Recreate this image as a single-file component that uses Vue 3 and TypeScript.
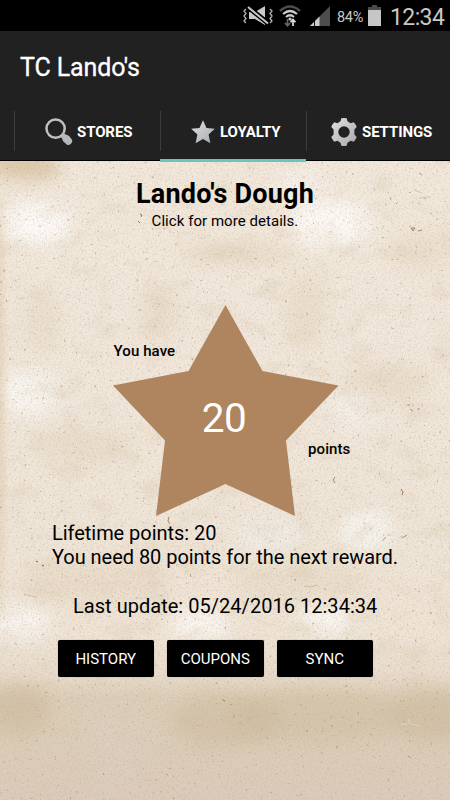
<script setup lang="ts">
import { ref } from 'vue'

interface Tab { id: string; label: string }
interface Patch { x: number; y: number; rx: number; ry: number; color: string; opacity: number }
interface Pit { x: number; y: number; d: string; color: string }

const tabs: Tab[] = [
  { id: 'stores', label: 'STORES' },
  { id: 'loyalty', label: 'LOYALTY' },
  { id: 'settings', label: 'SETTINGS' },
]
const active = ref('loyalty')
const points = ref(20)
const remaining = ref(80)
const actions: string[] = ['HISTORY', 'COUPONS', 'SYNC']

// Light and dark stains of the travertine surface
const patches: Patch[] = [
  { x: 36, y: 62, rx: 34, ry: 20, color: '#ffffff', opacity: 0.85 },
  { x: 330, y: 62, rx: 42, ry: 22, color: '#ffffff', opacity: 0.8 },
  { x: 300, y: 24, rx: 24, ry: 14, color: '#ffffff', opacity: 0.45 },
  { x: 28, y: 232, rx: 28, ry: 24, color: '#fbfbf8', opacity: 0.75 },
  { x: 355, y: 248, rx: 24, ry: 20, color: '#f8f8f5', opacity: 0.6 },
  { x: 366, y: 370, rx: 26, ry: 20, color: '#f9fbf8', opacity: 0.75 },
  { x: 270, y: 375, rx: 34, ry: 16, color: '#f2f2ee', opacity: 0.6 },
  { x: 22, y: 462, rx: 30, ry: 16, color: '#ffffff', opacity: 0.7 },
  { x: 200, y: 464, rx: 30, ry: 16, color: '#ffffff', opacity: 0.7 },
  { x: 327, y: 458, rx: 28, ry: 16, color: '#ffffff', opacity: 0.65 },
  { x: 24, y: 4, rx: 38, ry: 14, color: '#cbae82', opacity: 0.55 },
  { x: 0, y: 240, rx: 4, ry: 210, color: '#d5b98f', opacity: 0.4 },
  { x: 235, y: 93, rx: 60, ry: 10, color: '#d8c8a8', opacity: 0.4 },
  { x: 160, y: 150, rx: 22, ry: 28, color: '#dfd0b2', opacity: 0.35 },
  { x: 305, y: 150, rx: 20, ry: 40, color: '#e0d2b4', opacity: 0.4 },
  { x: 42, y: 158, rx: 20, ry: 34, color: '#e0d3b8', opacity: 0.35 },
  { x: 420, y: 90, rx: 32, ry: 20, color: '#e0d0b4', opacity: 0.35 },
  { x: 85, y: 285, rx: 50, ry: 18, color: '#decfb2', opacity: 0.35 },
  { x: 385, y: 222, rx: 44, ry: 18, color: '#decfb2', opacity: 0.4 },
  { x: 95, y: 420, rx: 75, ry: 22, color: '#dfcfb2', opacity: 0.35 },
  { x: 300, y: 420, rx: 70, ry: 20, color: '#dfcfb2', opacity: 0.3 },
  { x: 18, y: 548, rx: 32, ry: 26, color: '#c6b08e', opacity: 0.4 },
  { x: 225, y: 560, rx: 56, ry: 26, color: '#c7b493', opacity: 0.4 },
  { x: 320, y: 555, rx: 90, ry: 26, color: '#c8b695', opacity: 0.35 },
  { x: 432, y: 555, rx: 40, ry: 26, color: '#c4b08e', opacity: 0.4 },
  { x: 115, y: 590, rx: 30, ry: 40, color: '#ddd2c4', opacity: 0.4 },
]
const pits: Pit[] = [
  { x: 140, y: 55, d: 'm0-2 2 1-1 2M-2 5l2 2', color: '#80603c' },
  { x: 413, y: 68, d: 'm-2-1h4l-2 3zM5 2l4-1', color: '#8a6c48' },
  { x: 412, y: 248, d: 'm-2 0 3 2M5 0h3M-5-4h3', color: '#a08058' },
  { x: 334, y: 319, d: 'm1-3-2 3 2 3', color: '#b06a2e' },
  { x: 402, y: 332, d: 'm-1-4 2 3-1 3', color: '#8b5a30' },
  { x: 169, y: 359, d: 'm0-3-1 4 2 3', color: '#a86a34' },
  { x: 385, y: 378, d: 'm-2 1 3-3', color: '#b9804c' },
  { x: 404, y: 375, d: 'm-2 2 5-3', color: '#a87e50' },
  { x: 41, y: 403, d: 'm-5-3 2 1M1 1l2 1', color: '#55391f' },
  { x: 30, y: 435, d: 'm-6-2 8 2 5 1', color: '#cdb592' },
  { x: 310, y: 424, d: 'm-6 1 6 1 8-2', color: '#c8b492' },
  { x: 190, y: 415, d: 'm0-2 1 3', color: '#a98860' },
  { x: 423, y: 34, d: 'm-9-5 8 3M-4 3l12-1', color: '#d2bd9a' },
  { x: 155, y: 31, d: 'm-3-2 2 1M4 0l2 1', color: '#a58a66' },
  { x: 390, y: 38, d: 'm0-2 1 3M6 5l2-2', color: '#b49a74' },
  { x: 421, y: 14, d: 'm-2-2 3 2', color: '#a58a66' },
  { x: 410, y: 563, d: 'm-9 0h6m4 0 9 2m-12-7 2 5', color: '#e6d8c2' },
  { x: 224, y: 540, d: 'm-1-1 2 1', color: '#7a5c3c' },
  { x: 410, y: 597, d: 'm-2-2 3 2', color: '#a08a6a' },
]
</script>

<template>
  <div class="screen">
    <div class="statusbar">
      <svg class="mute" width="30" height="20" viewBox="0 0 30 20" fill="none">
        <path d="M6 6h6l10-6v19l-10-6H6z" fill="#c9c9c9" />
        <path d="M5 1 26 18" stroke="#000" stroke-width="5" />
        <path d="M5 1 25 17.500" stroke="#c9c9c9" stroke-width="2" />
        <path d="m3 3-2 2 2 2.500-2 2.500 2 2.500-2 2.500 2 2M27 3l2 2-2 2.500 2 2.500-2 2.500 2 2.500-2 2" stroke="#b5b5b5" stroke-width="1.300" />
      </svg>
      <svg class="wifi" width="22" height="23" viewBox="0 0 22 23" fill="none">
        <path d="M1 6Q11-3 21 6" stroke="#4d4d4d" stroke-width="2.600" />
        <path d="M4 9Q11 3 18 9M7 12Q11 8.500 15 12" stroke="#ccc" stroke-width="2.200" />
        <circle cx="11" cy="14" r="1.600" fill="#ccc" />
        <path d="M8.500 14v6.500M6 18l2.500 2.800L11 18" stroke="#666" stroke-width="1.700" />
        <path d="M14 21v-6.500M11.500 17.300 14 14.500l2.500 2.800" stroke="#ddd" stroke-width="1.700" />
      </svg>
      <svg class="signal" width="21" height="21" viewBox="0 0 21 21">
        <path d="M20 0v20H0z" fill="#4d4d4d" />
        <path d="M9.500 10.500V20H0z" fill="#ccc" />
        <path d="M4.500 15v5" stroke="#000" stroke-width=".9" />
      </svg>
      <span class="percent">84%</span>
      <svg class="battery" width="13" height="21" viewBox="0 0 13 21">
        <path d="M4 0h5v2h4v4H0V2h4z" fill="#4b4b4b" />
        <path d="M0 5h13v16H0z" fill="#c6c6c6" />
      </svg>
      <span class="clock">12:34</span>
    </div>

    <header class="appbar">
      <h1 class="title">TC Lando's</h1>
      <nav class="tabs">
        <div
          v-for="tab in tabs"
          :key="tab.id"
          class="tab"
          :class="[tab.id, { active: tab.id === active }]"
          @click="active = tab.id"
        >
          <svg v-if="tab.id === 'stores'" class="icon" width="28" height="28" viewBox="0 0 28 28">
            <defs>
              <linearGradient id="metal" x1="0" y1="0" x2="1" y2="1">
                <stop offset="0" stop-color="#dfe1e3" />
                <stop offset="1" stop-color="#a6a8aa" />
              </linearGradient>
            </defs>
            <path d="m15.800 19.300 3.800-3.800 1.500 1.200q2.200.2 3.200 1.500l2.700 3.500q1 1.700-.8 3.800-2.300 2.200-4.200 1.200l-3.600-3.200q-1.200-1.200-1.300-2.900z" fill="#b4b8bb" />
            <circle cx="10.600" cy="10.600" r="9.100" fill="none" stroke="#bec1c3" stroke-width="2.500" />
          </svg>
          <svg v-else-if="tab.id === 'loyalty'" class="icon" width="24" height="24" viewBox="0 0 24 24">
            <path d="m12 .3 3.500 7.600 8.300.9-6.200 5.700 1.800 8.800L12 19l-7.400 4.300 1.800-8.800L.2 8.800l8.300-.9z" fill="url(#metal)" />
          </svg>
          <svg v-else class="icon" width="28" height="28" viewBox="0 0 28 28">
            <path
              fill="url(#metal)"
              fill-rule="evenodd"
              d="M11.300.3q2.700-.6 5.400 0l.8 3 3.100 1.900 3.200-.9q2 2.200 2.900 4.700l-2.300 2.500v5l2.300 2.500q-.9 2.500-2.900 4.700l-3.200-.9-3.100 1.900-.8 3q-2.700.6-5.400 0l-.8-3-3.100-1.900-3.200.9Q2.200 21.500 1.300 19l2.300-2.500v-5L1.300 9q.9-2.500 2.900-4.700l3.200.9 3.100-1.900zM14 8.300a5.700 5.700 0 1 0 0 11.400 5.700 5.700 0 0 0 0-11.400z"
            />
          </svg>
          <span>{{ tab.label }}</span>
        </div>
      </nav>
    </header>

    <main class="content">
      <svg class="stone" width="450" height="639" viewBox="0 0 450 639">
        <defs>
          <linearGradient id="base" x1="0" y1="0" x2="0" y2="1">
            <stop offset="0" stop-color="#f2e8dc" />
            <stop offset=".2" stop-color="#f2e8dd" />
            <stop offset=".5" stop-color="#f0e6da" />
            <stop offset=".74" stop-color="#efe4d6" />
            <stop offset=".8" stop-color="#eaddcd" />
            <stop offset=".84" stop-color="#ddceb9" />
            <stop offset=".92" stop-color="#dccdba" />
            <stop offset="1" stop-color="#dccbbb" />
          </linearGradient>
          <filter id="soft" x="-60%" y="-60%" width="220%" height="220%">
            <feGaussianBlur stdDeviation="9" />
          </filter>
          <filter id="edge" x="-60%" y="-10%" width="220%" height="120%" filterUnits="objectBoundingBox">
            <feGaussianBlur stdDeviation="3" />
          </filter>
          <filter id="clouds" x="0" y="0" width="100%" height="100%">
            <feTurbulence type="fractalNoise" baseFrequency=".035 .05" numOctaves="4" seed="8" />
            <feColorMatrix values="0 0 0 0 .68  0 0 0 0 .58  0 0 0 0 .42  1.800 0 0 0 -.9" />
          </filter>
          <filter id="grain" x="0" y="0" width="100%" height="100%">
            <feTurbulence type="fractalNoise" baseFrequency=".55" numOctaves="3" seed="3" />
            <feColorMatrix values="0 0 0 0 .48  0 0 0 0 .38  0 0 0 0 .26  1.100 0 0 0 -.48" />
          </filter>
          <filter id="specks" x="0" y="0" width="100%" height="100%">
            <feTurbulence type="fractalNoise" baseFrequency=".33" numOctaves="2" seed="21" />
            <feColorMatrix values="0 0 0 0 .30  0 0 0 0 .23  0 0 0 0 .15  7 0 0 0 -4.900" />
          </filter>
        </defs>
        <rect width="450" height="639" fill="url(#base)" />
        <ellipse
          v-for="(p, i) in patches"
          :key="i"
          :cx="p.x"
          :cy="p.y"
          :rx="p.rx"
          :ry="p.ry"
          :fill="p.color"
          :opacity="p.opacity"
          :filter="p.rx < 10 ? 'url(#edge)' : 'url(#soft)'"
        />
        <rect width="450" height="639" filter="url(#clouds)" opacity=".45" />
        <rect width="450" height="639" filter="url(#grain)" opacity=".6" />
        <rect width="450" height="639" filter="url(#specks)" opacity=".5" />
        <path
          v-for="(p, i) in pits"
          :key="'pit' + i"
          :transform="`translate(${p.x} ${p.y})`"
          :d="p.d"
          :stroke="p.color"
          fill="none"
          opacity=".8"
        />
      </svg>

      <section class="shop">
        <h2>Lando's Dough</h2>
        <p>Click for more details.</p>
      </section>

      <div class="badge">
        <svg width="226" height="212" viewBox="0 0 226 212">
          <path d="M112.500 0 149.500 66 225.500 80.500 173 135.500 182 211 112.500 179 43 211 52 135.500 0 80.500 75.500 66z" fill="#ae855f" />
        </svg>
        <span class="have">You have</span>
        <span class="count">{{ points }}</span>
        <span class="unit">points</span>
      </div>

      <section class="summary">
        <p class="lifetime">Lifetime points: {{ points }}</p>
        <p class="need">You need {{ remaining }} points for the next reward.</p>
      </section>
      <p class="updated">Last update: 05/24/2016 12:34:34</p>

      <div class="actions">
        <button v-for="a in actions" :key="a" type="button">{{ a }}</button>
      </div>
    </main>
  </div>
</template>

<style>
body {
  margin: 0;
  background: #d4c2af;
}
</style>

<style scoped>
.screen {
  width: 450px;
  height: 800px;
  display: flex;
  flex-direction: column;
  overflow: hidden;
  font-family: Roboto, sans-serif;
  color: #000;
}
h1,
h2,
p {
  margin: 0;
  font-weight: 400;
  white-space: nowrap;
}
.statusbar {
  box-sizing: border-box;
  height: 31px;
  flex: none;
  display: flex;
  align-items: flex-start;
  justify-content: flex-end;
  padding: 5px 6px 0 0;
  background: #000;
  color: #c8c8c8;
}
.mute {
  margin: 1px 6px 0 0;
}
.wifi {
  margin-right: 9px;
}
.signal {
  margin: 1px 6px 0 0;
}
.percent {
  width: 31px;
  font-size: 14.500px;
  line-height: 25px;
  letter-spacing: -0.300px;
}
.clock {
  width: 54px;
  margin-left: 9px;
  font-size: 23px;
  line-height: 25px;
  letter-spacing: -0.600px;
  white-space: nowrap;
}
.appbar {
  box-sizing: border-box;
  height: 130px;
  flex: none;
  display: flex;
  flex-direction: column;
  background: #212121;
  border-bottom: 1px solid #000;
}
.title {
  height: 72px;
  padding-left: 20px;
  font-size: 25px;
  line-height: 73px;
  letter-spacing: -0.100px;
  color: #fff;
  -webkit-text-stroke: 0.300px #fff;
}
.tabs {
  display: grid;
  grid-template-columns: 146px 146px 146px;
  height: 58px;
  padding-left: 14px;
}
.tab {
  box-sizing: border-box;
  display: flex;
  align-items: center;
  height: 58px;
  padding: 0 0 1px 31px;
  background: linear-gradient(#3c3c3c, #3c3c3c) 0 8px / 1px 40px no-repeat;
  color: #fff;
  font-size: 15px;
  font-weight: 700;
  letter-spacing: -0.100px;
  white-space: nowrap;
}
.tab .icon {
  flex: none;
  margin-right: 4px;
}
.tab.loyalty {
  padding-left: 31px;
}
.tab.loyalty .icon {
  margin-right: 5px;
}
.tab.settings {
  padding-left: 24px;
}
.tab.active {
  height: 59px;
  border-bottom: 3px solid #6cc5bd;
  padding-top: 1px;
  padding-bottom: 0;
}
.content {
  position: relative;
  flex: 1;
  display: flex;
  flex-direction: column;
  align-items: flex-start;
}
.stone {
  position: absolute;
  inset: 0;
  z-index: -1;
}
.shop {
  width: 450px;
  padding-top: 16px;
  text-align: center;
}
.shop h2 {
  font-size: 27px;
  line-height: 34px;
  font-weight: 700;
  letter-spacing: 0.200px;
}
.shop p {
  font-size: 15px;
  line-height: 21px;
  letter-spacing: 0.050px;
}
.badge {
  position: relative;
  width: 226px;
  height: 212px;
  margin: 73px 0 0 112.500px;
}
.badge svg {
  display: block;
}
.badge span {
  position: absolute;
  white-space: nowrap;
}
.have,
.unit {
  font-size: 15px;
  line-height: 20px;
  font-weight: 500;
  letter-spacing: 0.100px;
}
.have {
  left: 1px;
  top: 36px;
}
.unit {
  left: 195.500px;
  top: 134px;
}
.count {
  left: 0;
  top: 88px;
  width: 223px;
  text-align: center;
  font-size: 40.500px;
  line-height: 50px;
  letter-spacing: -0.400px;
  color: #fff;
}
.summary {
  padding: 4px 0 0 52px;
  font-size: 20px;
  line-height: 24px;
  letter-spacing: -0.040px;
}
.updated {
  padding: 25px 0 0 73px;
  font-size: 20px;
  line-height: 24px;
  letter-spacing: 0.030px;
}
.actions {
  display: grid;
  grid-template-columns: repeat(3, 96.500px);
  gap: 13px;
  padding: 22px 0 0 57.500px;
}
.actions button {
  height: 37px;
  padding: 2px 0 0;
  border: 0;
  border-radius: 2px;
  background: #000;
  color: #fff;
  font: 400 15px/35px Roboto, sans-serif;
  box-shadow: 0 0 1px rgba(0, 0, 0, 0.400);
}
</style>
